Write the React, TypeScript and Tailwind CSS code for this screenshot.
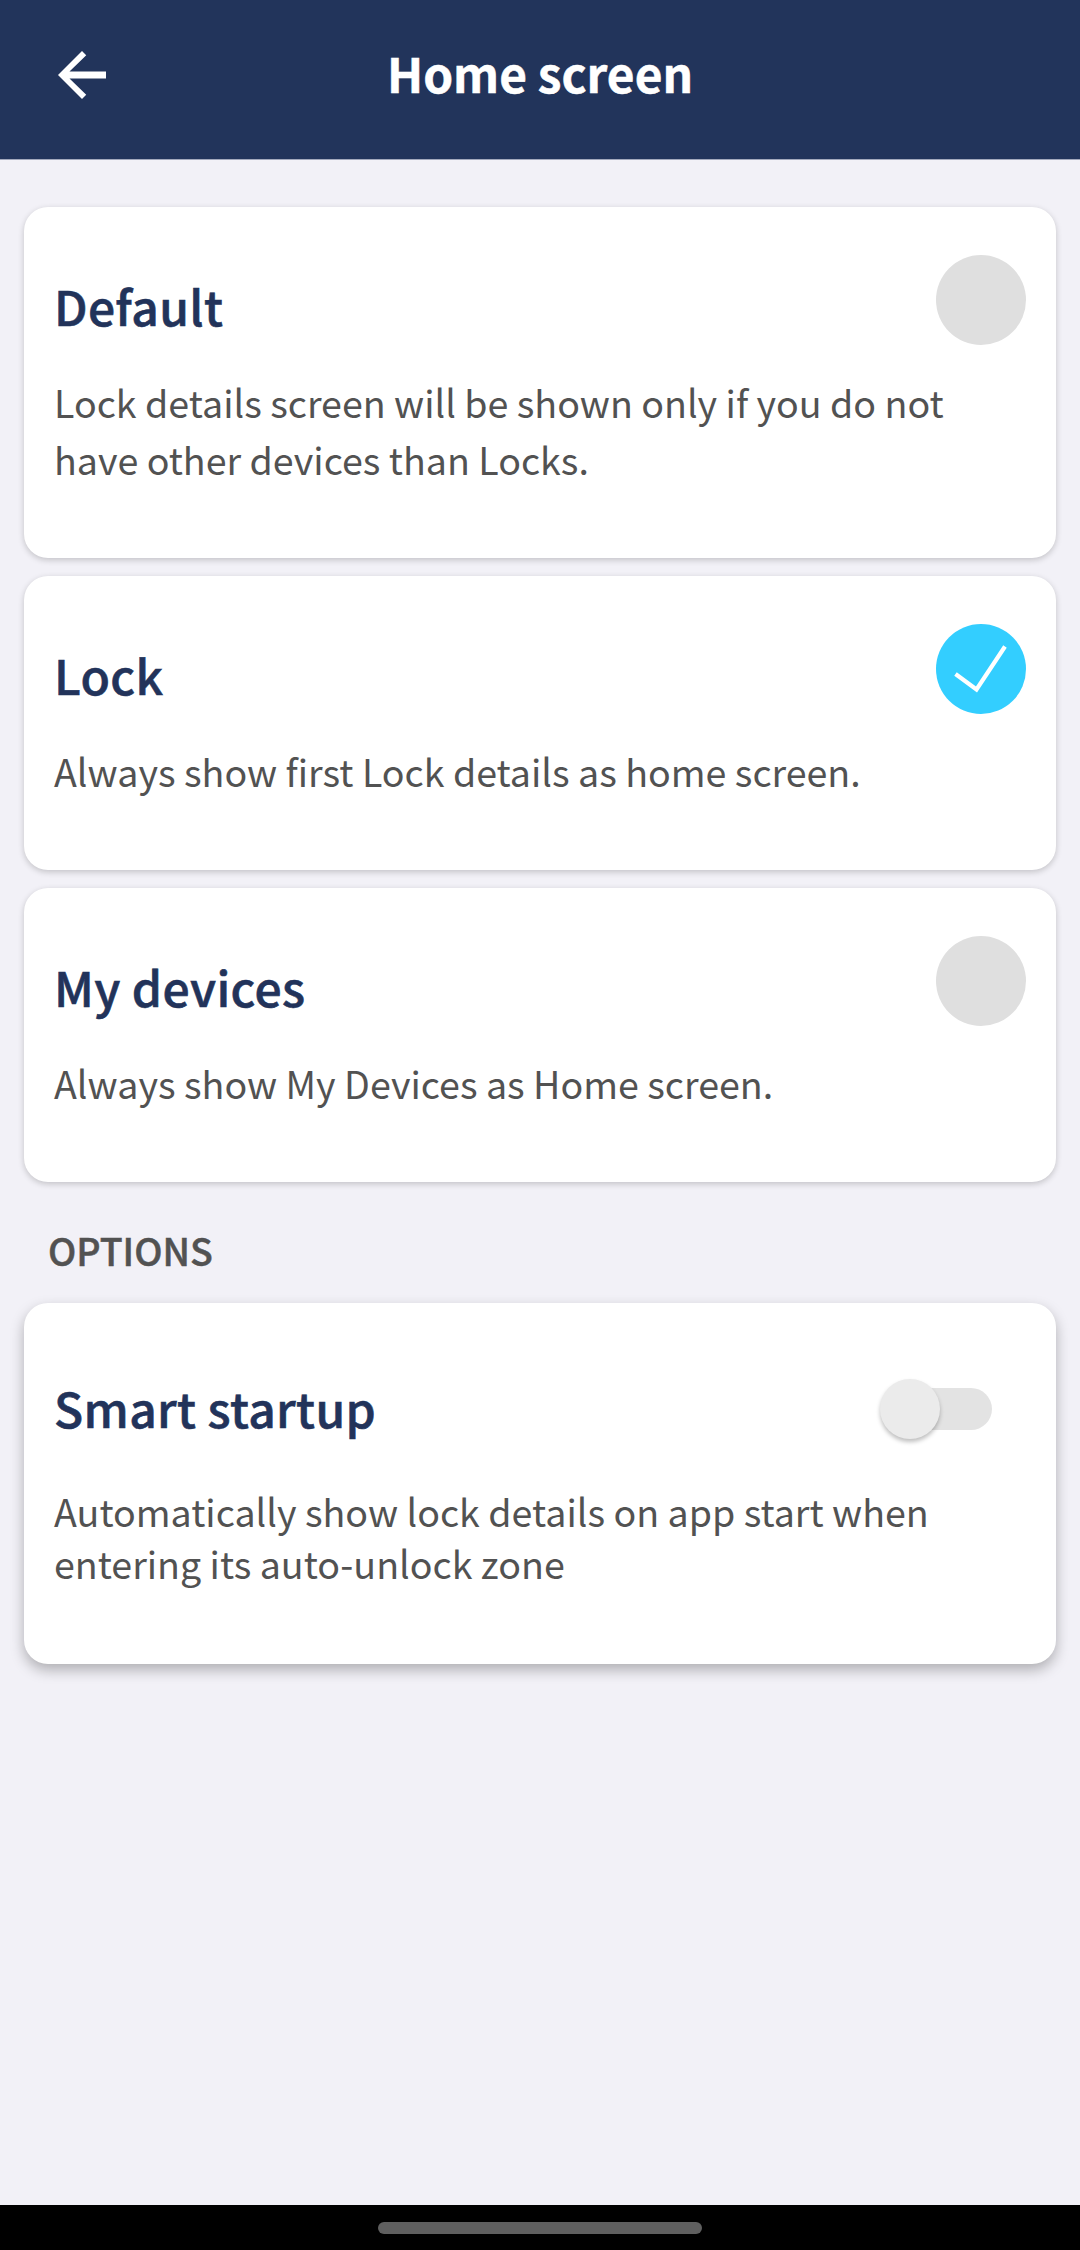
const card = "mx-6 rounded-[24px] bg-white px-[30px] flex flex-col";
const title = "text-[48px] font-medium tracking-[0.35px] text-[#22335a] whitespace-nowrap [-webkit-text-stroke:0.6px_#22335a]";
const body = "text-[37.6px] text-[#525252] whitespace-nowrap";

function Choice({ name, lines, checked, height }: { name: string; lines: string[]; checked?: boolean; height: string }) {
  return (
    <section className={`${card} shadow-[0_2px_6px_rgba(0,0,0,0.2)] ${height}`}>
      <div className="flex h-[138px] justify-between">
        <h2 className={`${title} mt-[58px] h-20 leading-[80px]`}>{name}</h2>
        <div className={`mt-12 flex size-[90px] items-center justify-center rounded-full ${checked ? "bg-[#33ceff]" : "bg-[#dfdfdf]"}`}>
          {checked && (
            <svg viewBox="0 0 90 90" className="size-[90px]" fill="none" stroke="white" strokeWidth="4.2">
              <path d="M19.5 50 40.5 65.5 69 22.5" />
            </svg>
          )}
        </div>
      </div>
      <div className="mt-7">
        {lines.map((l) => (
          <p key={l} className={`${body} leading-[57px]`}>{l}</p>
        ))}
      </div>
    </section>
  );
}

export default function App() {
  return (
    <main className="flex h-[2250px] w-[1080px] flex-col bg-[#f2f1f7] font-['Noto_Sans_CJK_SC',sans-serif]">
      <header className="grid h-40 grid-cols-[160px_1fr_160px] items-start border-b border-[#a3a9bd] bg-[#22345b]">
        <svg viewBox="0 0 24 24" className="ml-[46px] mt-[38.5px] size-[72px]" fill="white">
          <path d="M20 10.85H7.83l5.59-5.44L12 4l-8 8 8 8 1.41-1.41-5.58-5.44H20z" />
        </svg>
        <h1 className="mt-[33px] text-center text-[47.8px] font-bold leading-[80px] text-white [-webkit-text-stroke:0.5px_white]">Home screen</h1>
      </header>
      <div className="mt-[47px] flex flex-col gap-[18px]">
        <Choice name="Default" height="h-[351px]" lines={["Lock details screen will be shown only if you do not", "have other devices than Locks."]} />
        <Choice name="Lock" checked height="h-[294px]" lines={["Always show first Lock details as home screen."]} />
        <Choice name="My devices" height="h-[294px]" lines={["Always show My Devices as Home screen."]} />
      </div>
      <h3 className="ml-12 mt-[38px] text-[37.5px] font-medium leading-[60px] text-[#525252] [-webkit-text-stroke:0.5px_#525252]">OPTIONS</h3>
      <section className={`${card} mt-[23px] h-[361px] shadow-[0_6px_14px_rgba(0,0,0,0.28)]`}>
        <div className="mt-16 flex h-20 justify-between">
          <h2 className={`${title} leading-[80px]`}>Smart startup</h2>
          <div className="mr-[34px] mt-[21px] flex h-[42px] w-[108px] items-center rounded-full bg-[#e3e3e3]">
            <span className="-ml-1 size-[60px] rounded-full bg-[#ebebeb] shadow-[0_3px_4px_rgba(0,0,0,0.25)]" />
          </div>
        </div>
        <div className="mt-[38px]">
          <p className={`${body} leading-[52px]`}>Automatically show lock details on app start when</p>
          <p className={`${body} leading-[52px]`}>entering its auto-unlock zone</p>
        </div>
      </section>
      <footer className="mt-auto flex h-[45px] items-start justify-center bg-black pt-[17px]">
        <div className="h-3 w-[324px] rounded-full bg-[#5f5f5f]" />
      </footer>
    </main>
  );
}
